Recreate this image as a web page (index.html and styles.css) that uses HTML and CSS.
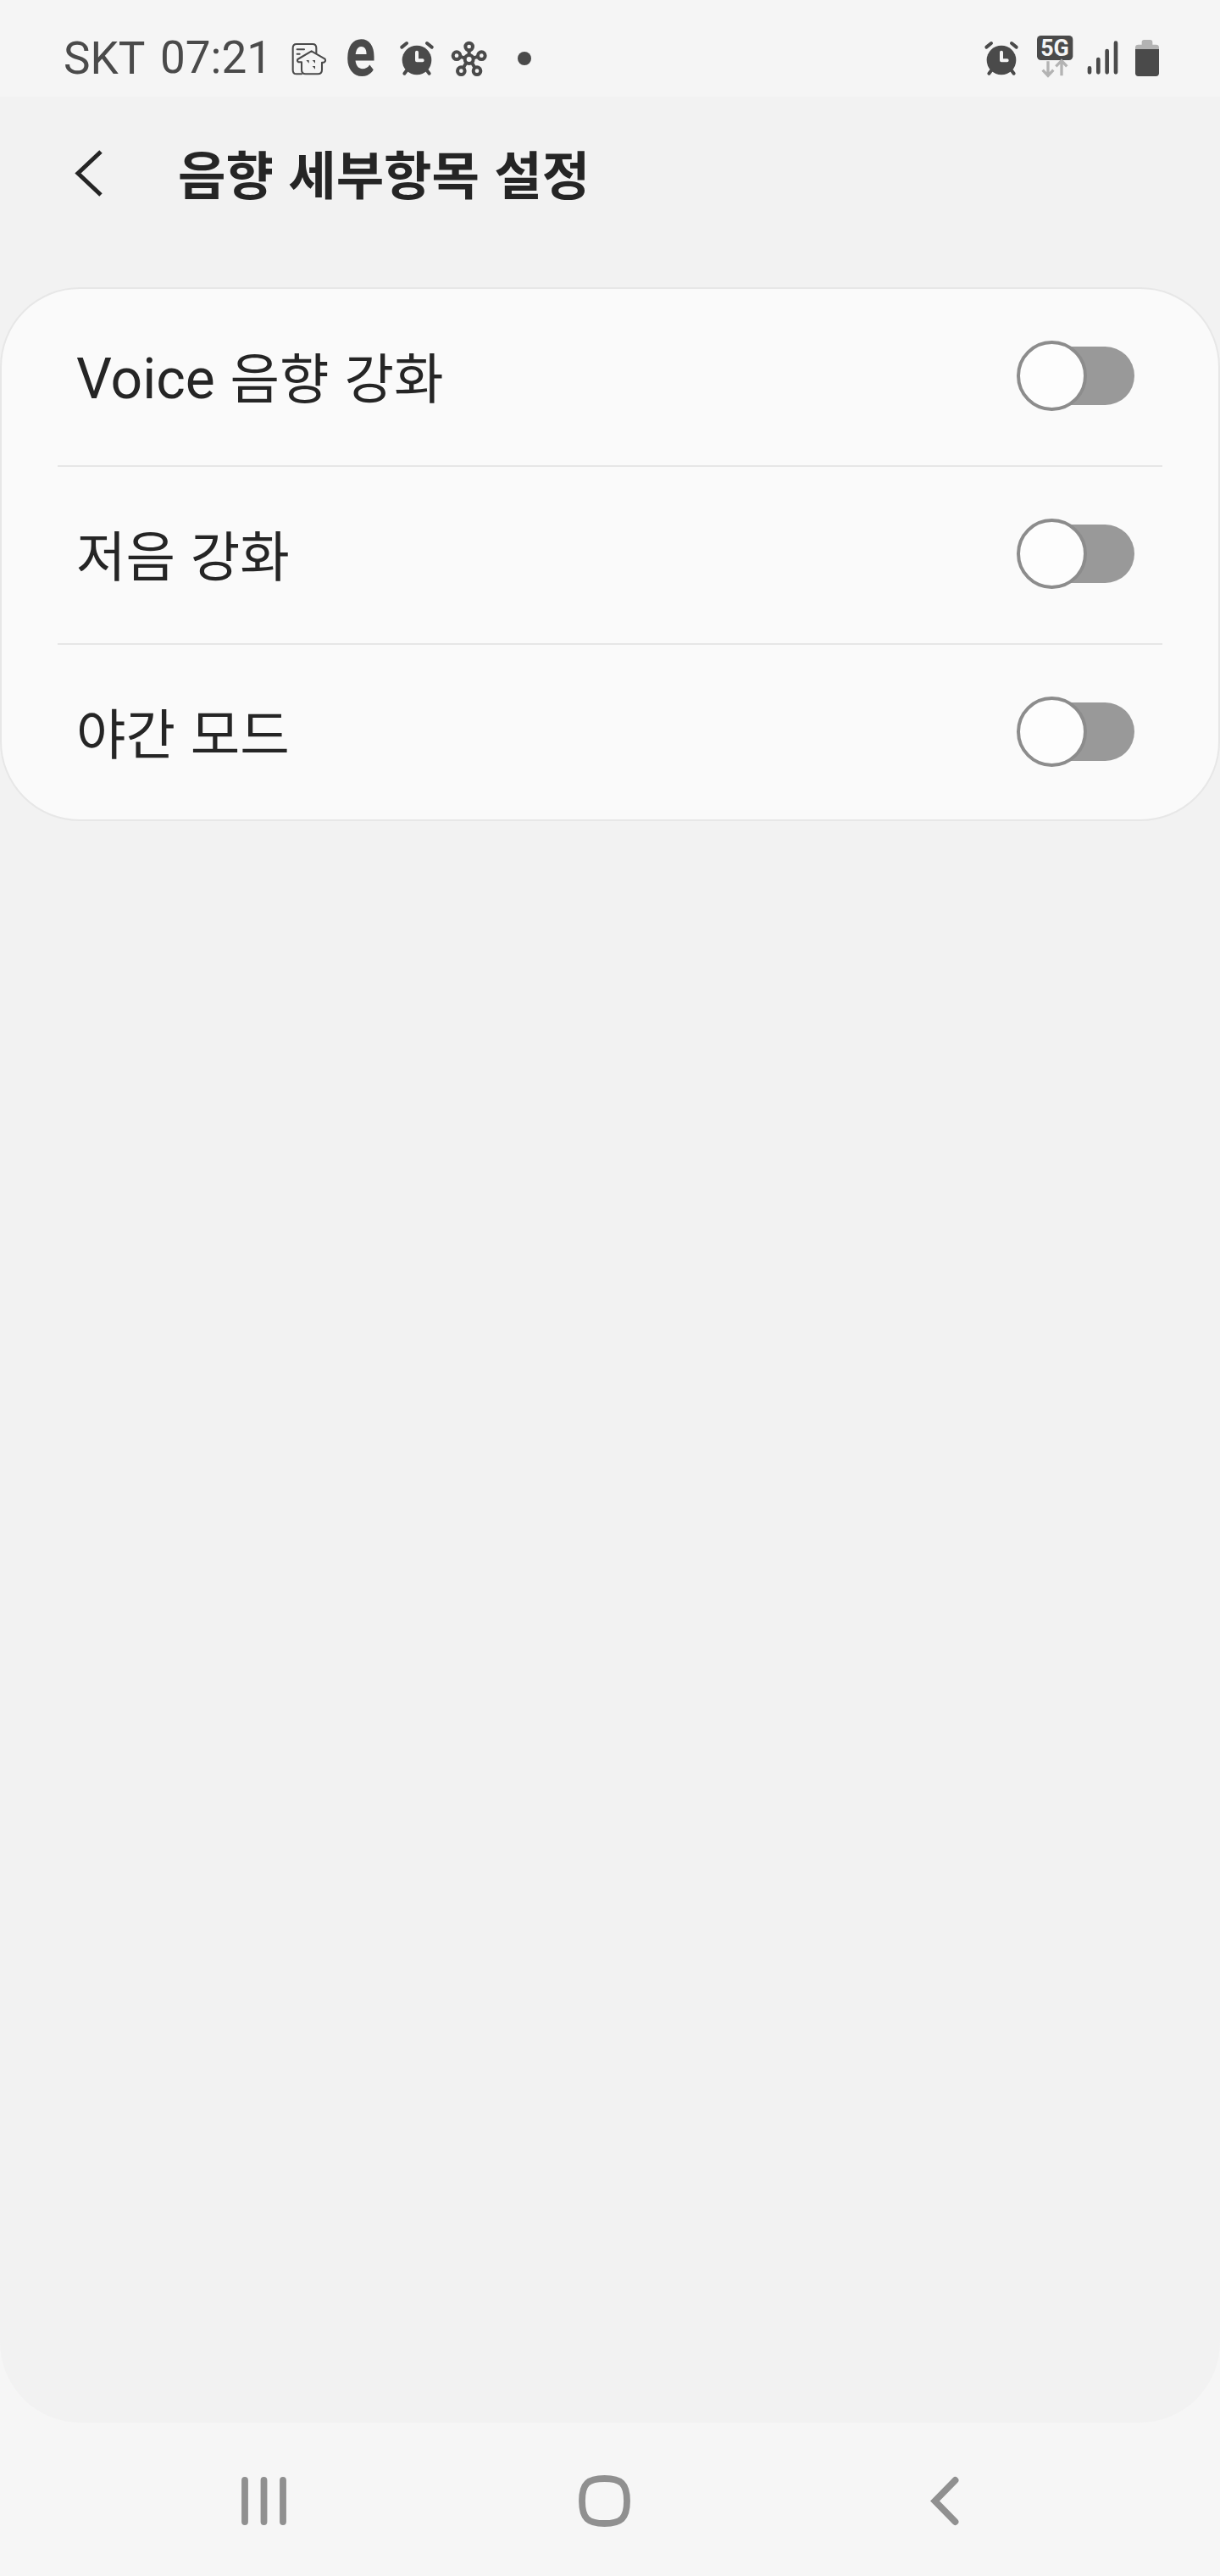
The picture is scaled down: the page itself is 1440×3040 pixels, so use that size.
FILE: index.html
```html
<!DOCTYPE html>
<html lang="ko">
<head>
<meta charset="utf-8">
<title>음향 세부항목 설정</title>
<link rel="stylesheet" href="styles.css">
</head>
<body>
<svg class="defs" width="0" height="0">
  <symbol id="alarm" viewBox="0 0 126 168">
    <circle cx="63" cy="90" r="52" fill="currentColor"/>
    <path d="M10 44L27 30M116 44L99 30" stroke="currentColor" stroke-width="12" stroke-linecap="round"/>
    <path d="M27 127L19 137M99 127L107 137" stroke="currentColor" stroke-width="12" stroke-linecap="round"/>
    <path d="M63 62V91H83" fill="none" stroke="#f4f4f4" stroke-width="12" stroke-linecap="round" stroke-linejoin="round"/>
  </symbol>
</svg>
<div class="screen">
  <header class="status">
    <span class="carrier">SKT</span>
    <span class="time">07:21</span>
    <svg class="ic-home" viewBox="36 33 144 168" fill="none" stroke="currentColor" stroke-width="6.2" stroke-linejoin="round" stroke-linecap="round">
      <path d="M78 172H60Q47 172 47 158V80Q47 66 60 66H117Q130 66 130 80V98M62 85H87M62 101H71"/>
      <path d="M113 91L161 119Q165 127 157 131H150V157Q150 172 136 172H92Q78 172 78 157V130H67Q61 127 64 120Z"/>
      <path d="M94 123H104V134ZM116 123H126V134ZM116 144H126V155Z" fill="currentColor" stroke="none"/>
    </svg>
    <svg class="ic-e" viewBox="0 0 38 56"><text x="-1" y="44.6" transform="scale(.88 1.08)">e</text></svg>
    <svg class="ic-alarm"><use href="#alarm"/></svg>
    <svg class="ic-hub" viewBox="600 33 144 168" fill="none" stroke="currentColor" stroke-width="12">
      <circle cx="671" cy="75" r="13"/><circle cx="627" cy="107" r="13"/><circle cx="715" cy="107" r="13"/><circle cx="643" cy="161" r="13"/><circle cx="699" cy="161" r="13"/><circle cx="671" cy="120" r="15"/>
      <path d="M671 88V106M640 111L657 115M702 111L685 115M651 149L661 132M691 149L681 132"/>
    </svg>
    <span class="more"></span>
    <svg class="ic-alarm right"><use href="#alarm"/></svg>
    <svg class="ic-5g" viewBox="249 63 132 168">
      <rect x="252" y="66" width="127" height="87" rx="14" fill="currentColor"/>
      <text x="315" y="138" text-anchor="middle" textLength="101" lengthAdjust="spacingAndGlyphs">5G</text>
      <path d="M291 157V208M272 188L291 208L310 188M339 208V156M319 175L339 155L358 175" fill="none" stroke="#b3b3b3" stroke-width="10"/>
    </svg>
    <svg class="ic-signal" viewBox="429 63 114 168" stroke="currentColor" stroke-width="14" stroke-linecap="round">
      <path d="M438 181V196M469 150V196M500 120V196M531 92V196"/>
    </svg>
    <svg class="ic-battery" viewBox="597 63 90 168">
      <path d="M600 115V108Q600 98 611 98H623V89Q623 81 631 81H653Q661 81 661 89V98H673Q684 98 684 108V115Z" fill="#b3b3b3"/>
      <path d="M600 114H684V199Q684 210 673 210H611Q600 210 600 199Z" fill="currentColor"/>
    </svg>
  </header>
  <main class="page">
    <div class="titlebar">
      <svg class="back" viewBox="0 0 34 56"><path d="M31 2L4 27.5L31 53" fill="none" stroke="currentColor" stroke-width="5"/></svg>
      <h1>음향 세부항목 설정</h1>
    </div>
    <section class="card">
      <div class="row"><span class="label"><span class="latin">Voice</span> 음향 강화</span><span class="toggle"></span></div>
      <div class="row"><span class="label">저음 강화</span><span class="toggle"></span></div>
      <div class="row"><span class="label">야간 모드</span><span class="toggle"></span></div>
    </section>
  </main>
  <nav class="nav">
    <svg class="recents" viewBox="0 0 53 57"><path d="M4 4V53M26.5 4V53M49 4V53" stroke="currentColor" stroke-width="7.8" stroke-linecap="round"/></svg>
    <svg class="home" viewBox="0 0 61 61"><path d="M30.5 4C50 4 57 10 57 30.5S50 57 30.5 57S4 51 4 30.5S11 4 30.5 4Z" fill="none" stroke="currentColor" stroke-width="7.8"/></svg>
    <svg class="navback" viewBox="0 0 34 57"><path d="M29.5 4L5.5 28.5L29.5 53" fill="none" stroke="currentColor" stroke-width="7.8" stroke-linecap="round"/></svg>
  </nav>
</div>
</body>
</html>
```
FILE: styles.css
```css
*, *::before, *::after { box-sizing: border-box; }
body { margin: 0; background: #f6f6f6; font-family: Roboto, "Noto Sans CJK KR", sans-serif; }
svg { display: block; flex: none; overflow: visible; }
.defs { position: absolute; }
.screen { width: 1440px; height: 3040px; display: flex; flex-direction: column; }

.status { height: 114px; flex: none; display: flex; align-items: flex-start; padding: 41px 71px 0 75px; background: #f5f5f5; color: #4a4a4a; }
.carrier, .time { font-size: 53px; line-height: 56px; white-space: nowrap; flex: none; }
.carrier { width: 114px; }
.time { width: 153px; margin-top: -1px; }
.ic-home { width: 48px; height: 56px; }
.ic-e { width: 38px; height: 56px; margin-left: 19px; }
.ic-e text { font: 700 74px Roboto, sans-serif; fill: currentColor; }
.ic-alarm { width: 42px; height: 56px; margin-left: 24px; }
.ic-hub { width: 48px; height: 56px; margin-left: 17px; }
.more { width: 16px; height: 16px; margin: 20px 0 0 33px; border-radius: 50%; background: currentColor; }
.ic-alarm.right { margin-left: auto; }
.ic-5g { width: 44px; height: 56px; margin-left: 20px; }
.ic-5g text { font: 700 82px Roboto, sans-serif; fill: #f4f4f4; }
.ic-signal { width: 38px; height: 56px; margin-left: 16px; }
.ic-battery { width: 30px; height: 56px; margin-left: 18px; }

.page { height: 2745px; flex: none; background: #f2f2f2; border-radius: 0 0 95px 95px; }
.titlebar { height: 225px; display: flex; align-items: flex-start; padding: 63px 0 0 88px; color: #252525; }
.back { width: 34px; height: 56px; }
h1 { margin: -5px 0 0 88px; font: 700 61.4px/64px "Noto Sans CJK KR", sans-serif; white-space: nowrap; }

.card { height: 630px; background: #fafafa; border: 2px solid #e7e7e7; border-radius: 94px; padding: 0 66px; }
.row { height: 210px; display: flex; align-items: flex-start; justify-content: space-between; padding: 61px 33px 0 22px; border-bottom: 2px solid #e6e6e6; }
.row:last-child { border-bottom: 0; }
.label { margin-top: -7px; font: 400 63.6px/94px "Noto Sans CJK KR", sans-serif; color: #252525; white-space: nowrap; }
.latin { font-family: Roboto, sans-serif; font-size: 66px; }
.toggle { width: 139px; height: 83px; position: relative; flex: none; }
.toggle::before { content: ""; position: absolute; left: 30px; right: 0; top: 7px; height: 69px; border-radius: 0 35px 35px 0; background: #999; }
.toggle::after { content: ""; position: absolute; left: 0; top: 0; width: 83px; height: 83px; border: 4px solid #8c8c8c; border-radius: 50%; background: #fdfdfd; }

.nav { flex: 1; display: flex; align-items: flex-start; padding: 62px 0 0 285px; color: #909090; }
.recents { width: 53px; height: 57px; margin-top: 2px; }
.home { width: 61px; height: 61px; margin-left: 345px; }
.navback { width: 34px; height: 57px; margin: 2px 0 0 354px; }
```
